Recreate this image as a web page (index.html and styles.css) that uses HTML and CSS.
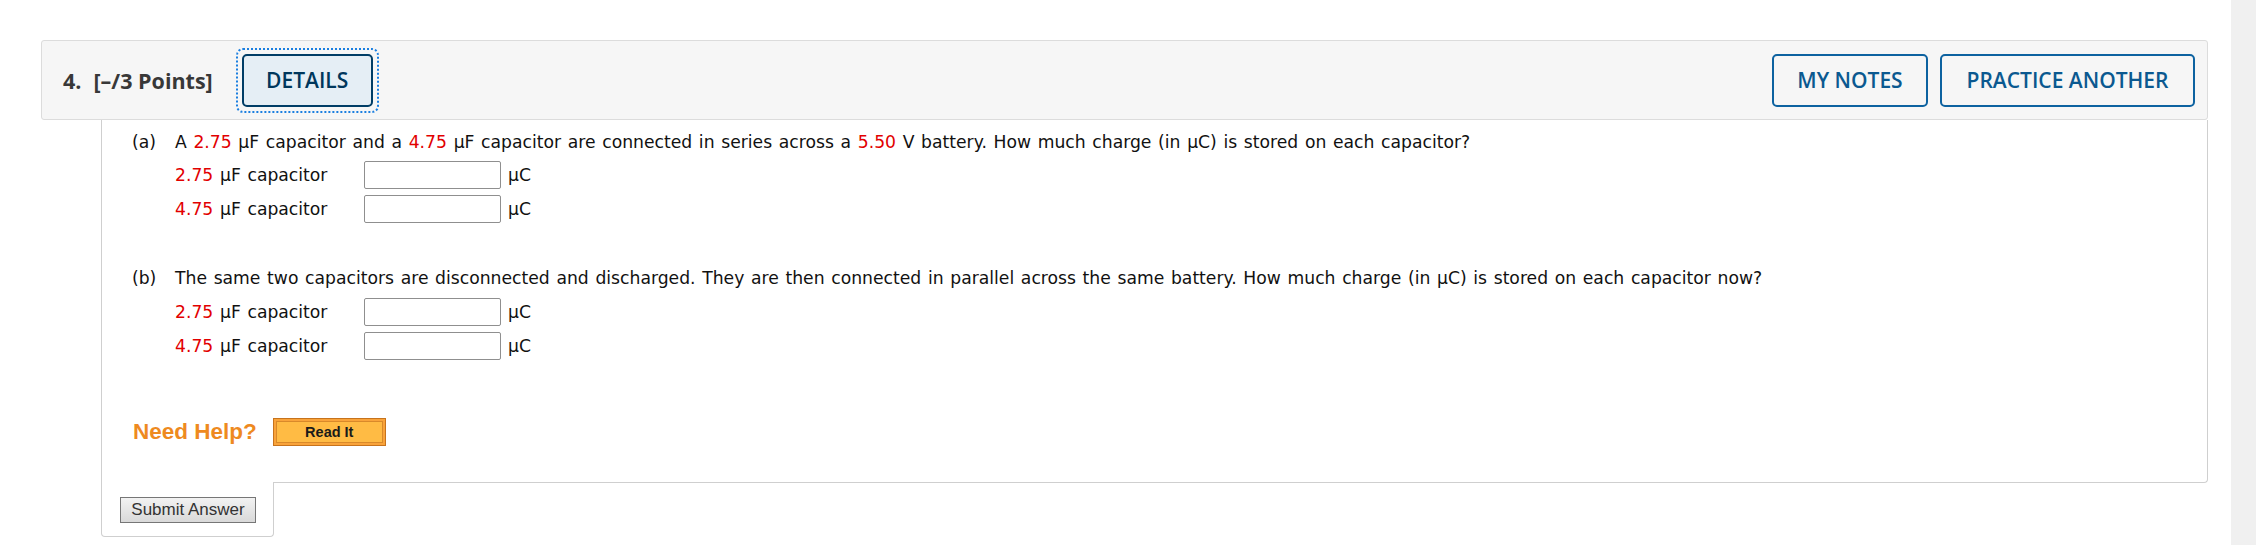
FILE: index.html
```html
<!DOCTYPE html>
<html>
<head>
<meta charset="utf-8">
<link rel="stylesheet" href="styles.css">
</head>
<body>
<div class="page">
  <main class="main">
    <section class="question">
      <header class="q-header">
        <div class="q-title"><span class="q-num">4.</span><span class="q-points">[–/3 Points]</span></div>
        <span class="focus-ring"><button class="btn btn-details">DETAILS</button></span>
        <div class="q-actions">
          <button class="btn btn-outline btn-notes">MY NOTES</button>
          <button class="btn btn-outline btn-practice">PRACTICE ANOTHER</button>
        </div>
      </header>
      <div class="q-body">
        <div class="part part-a">
          <div class="part-text"><span class="part-label">(a)</span><span>A <span class="red">2.75</span> µF capacitor and a <span class="red">4.75</span> µF capacitor are connected in series across a <span class="red">5.50</span> V battery. How much charge (in µC) is stored on each capacitor?</span></div>
          <div class="rows">
            <div class="row"><span class="row-label"><span class="red">2.75</span> µF capacitor</span><input class="answer" type="text"><span class="unit">µC</span></div>
            <div class="row"><span class="row-label"><span class="red">4.75</span> µF capacitor</span><input class="answer" type="text"><span class="unit">µC</span></div>
          </div>
        </div>
        <div class="part part-b">
          <div class="part-text"><span class="part-label">(b)</span><span>The same two capacitors are disconnected and discharged. They are then connected in parallel across the same battery. How much charge (in µC) is stored on each capacitor now?</span></div>
          <div class="rows">
            <div class="row"><span class="row-label"><span class="red">2.75</span> µF capacitor</span><input class="answer" type="text"><span class="unit">µC</span></div>
            <div class="row"><span class="row-label"><span class="red">4.75</span> µF capacitor</span><input class="answer" type="text"><span class="unit">µC</span></div>
          </div>
        </div>
        <div class="help">
          <span class="help-text">Need Help?</span>
          <button class="read-it"><span class="read-inner">Read It</span></button>
        </div>
      </div>
      <div class="submit-tab">
        <button class="submit">Submit Answer</button>
      </div>
    </section>
  </main>
  <aside class="side-strip"></aside>
</div>
</body>
</html>
```

FILE: styles.css
```css
html, body {
  margin: 0;
  padding: 0;
  background: #ffffff;
}

.page {
  display: flex;
  width: 2256px;
  height: 545px;
}

.main {
  flex: 1;
  padding: 40px 23px 0 41px;
}

.side-strip {
  width: 25px;
  background: #f0f0f0;
}

.question {
  display: flex;
  flex-direction: column;
}

.q-header {
  display: flex;
  align-items: center;
  height: 78px;
  background: #f6f6f6;
  border: 1px solid #dcdcdc;
  border-radius: 3px;
  padding: 0 12px 0 21px;
  font-family: "Open Sans", sans-serif;
}

.q-title {
  display: flex;
  gap: 12px;
  font-weight: 700;
  font-size: 21.5px;
  color: #383838;
}

.focus-ring {
  display: inline-flex;
  margin-left: 23px;
  padding: 4px;
  border: 2px dotted #1b7fe0;
  border-radius: 7px;
}

.btn {
  font-family: "Open Sans", sans-serif;
  font-size: 21px;
  font-weight: 600;
  height: 53px;
  padding: 0;
  border-radius: 5px;
  cursor: pointer;
}

.btn-details {
  width: 131px;
  background: #e5eef5;
  border: 2px solid #003d66;
  color: #00375c;
}

.q-actions {
  margin-left: auto;
  display: flex;
  gap: 12px;
}

.btn-outline {
  background: transparent;
  border: 2px solid #0d62a0;
  color: #0b5990;
}

.btn-notes {
  width: 156px;
}

.btn-practice {
  width: 255px;
}

.q-body {
  margin-left: 60px;
  border: 1px solid #cfcfcf;
  border-top: none;
  border-radius: 0 0 4px 0;
  padding: 12px 0 36px 30px;
  font-family: "DejaVu Sans", Verdana, sans-serif;
  font-size: 17.2px;
  word-spacing: 1.2px;
  color: #111;
}

.part-text {
  display: flex;
  line-height: 20px;
}

.part-label {
  width: 43px;
  flex: none;
}

.red {
  color: #e20000;
}

.rows {
  margin-left: 43px;
  margin-top: 6px;
}

.part-b {
  margin-top: 42px;
}

.part-b .rows {
  margin-top: 7px;
}

.row {
  display: flex;
  align-items: center;
  height: 34px;
}

.row-label {
  width: 189px;
  flex: none;
}

.answer {
  width: 137px;
  height: 28px;
  box-sizing: border-box;
  margin: 0;
  border: 1px solid #8f8f8f;
  border-radius: 2px;
  background: #fff;
}

.unit {
  margin-left: 7px;
}

.help {
  display: flex;
  align-items: center;
  margin-top: 55px;
  margin-left: 1px;
  height: 28px;
  word-spacing: 0;
}

.help-text {
  font-family: "Liberation Sans", Arial, sans-serif;
  font-weight: 700;
  font-size: 22.5px;
  color: #ee8a1f;
}

.read-it {
  margin-left: 16px;
  width: 113px;
  height: 28px;
  padding: 2px;
  border: 1px solid #c7731c;
  background: #f9a33a;
  cursor: pointer;
  display: flex;
}

.read-inner {
  flex: 1;
  display: flex;
  align-items: center;
  justify-content: center;
  background: #ffbb44;
  border: 1px solid #d9892a;
  font-family: "Liberation Sans", Arial, sans-serif;
  font-weight: 700;
  font-size: 14.5px;
  color: #1a1a1a;
}

.submit-tab {
  margin-left: 60px;
  margin-top: -1px;
  width: 173px;
  box-sizing: border-box;
  background: #fff;
  border: 1px solid #cfcfcf;
  border-top: none;
  border-radius: 0 0 4px 4px;
  padding: 15px 0 13px 18px;
}

.submit {
  width: 136px;
  height: 26px;
  padding: 0;
  border: 1px solid #767676;
  background: linear-gradient(#f2f2f2, #d9d9d9);
  font-family: "Liberation Sans", Arial, sans-serif;
  font-size: 17px;
  color: #333;
  cursor: pointer;
}
```
